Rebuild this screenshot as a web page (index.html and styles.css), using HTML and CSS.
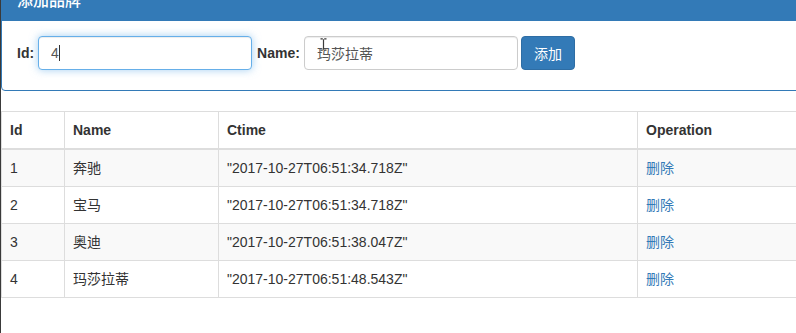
FILE: index.html
```html
<!DOCTYPE html>
<html>
<head>
    <title>品牌列表</title>
    <meta charset="utf-8">
    <link rel="stylesheet" href="styles.css">
</head>
<body>
    <div class="page">
        <div class="panel panel-primary">
            <div class="panel-heading">
                <h3 class="panel-title">添加品牌</h3>
            </div>
            <div class="panel-body form-inline">
                <label class="form-label">Id:</label>
                <span class="field id-field">
                    <input type="text" class="form-control is-focused" value="4">
                    <span class="caret"></span>
                </span>
                <label class="form-label">Name:</label>
                <span class="field name-field">
                    <input type="text" class="form-control" value="玛莎拉蒂">
                    <!-- mouse pointer sitting over the field -->
                    <svg class="ibeam" width="7" height="13" viewBox="0 0 7 13">
                        <path d="M0.5 0.8h2.3M4.2 0.8h2.3M3.5 1.3v10.4M0.5 12.2h2.3M4.2 12.2h2.3" stroke="#3b3b3b" stroke-width="1.2" fill="none"/>
                    </svg>
                </span>
                <input type="button" class="btn btn-primary" value="添加">
            </div>
        </div>

        <table class="table table-bordered table-striped">
            <colgroup>
                <col class="col-id">
                <col class="col-name">
                <col class="col-ctime">
                <col>
            </colgroup>
            <thead>
                <tr>
                    <th>Id</th>
                    <th>Name</th>
                    <th>Ctime</th>
                    <th>Operation</th>
                </tr>
            </thead>
            <tbody>
                <tr>
                    <td>1</td>
                    <td>奔驰</td>
                    <td>"2017-10-27T06:51:34.718Z"</td>
                    <td><a href="#">删除</a></td>
                </tr>
                <tr>
                    <td>2</td>
                    <td>宝马</td>
                    <td>"2017-10-27T06:51:34.718Z"</td>
                    <td><a href="#">删除</a></td>
                </tr>
                <tr>
                    <td>3</td>
                    <td>奥迪</td>
                    <td>"2017-10-27T06:51:38.047Z"</td>
                    <td><a href="#">删除</a></td>
                </tr>
                <tr>
                    <td>4</td>
                    <td>玛莎拉蒂</td>
                    <td>"2017-10-27T06:51:48.543Z"</td>
                    <td><a href="#">删除</a></td>
                </tr>
            </tbody>
        </table>
    </div>
</body>
</html>
```

FILE: styles.css
```css
html, body {
    height: 100%;
    margin: 0;
    padding: 0;
    overflow: hidden;
}

body {
    box-sizing: border-box;
    border-left: 1px solid #3a3a3a; /* edge of the window */
    background: #fff;
    font-family: "Liberation Sans", Arial, "Noto Sans CJK SC", sans-serif;
    font-size: 14px;
    line-height: 20px;
    color: #333;
}

.page {
    width: 840px;
    margin-top: -19px; /* page is scrolled a little */
}

.panel {
    margin-bottom: 20px;
    background: #fff;
    border: 1px solid #337ab7;
    border-radius: 4px;
}

.panel-heading {
    padding: 10px 15px;
    background: #337ab7;
    border-bottom: 1px solid #337ab7;
    color: #fff;
}

.panel-title {
    margin: 0;
    font-size: 16px;
    font-weight: 500;
    line-height: 1.1;
}

.panel-body {
    padding: 15px 15px 20px;
}

.form-inline {
    display: flex;
    align-items: center;
}

.form-label {
    font-weight: bold;
    margin-right: 4px;
}

.form-control {
    box-sizing: border-box;
    width: 214px;
    height: 34px;
    padding: 6px 12px;
    font-family: inherit;
    font-size: 14px;
    color: #555;
    background: #fff;
    border: 1px solid #ccc;
    border-radius: 4px;
    box-shadow: inset 0 1px 1px rgba(0, 0, 0, .075);
    outline: none;
}

.form-control.is-focused {
    border-color: #66afe9;
    box-shadow: inset 0 1px 1px rgba(0, 0, 0, .075), 0 0 8px rgba(102, 175, 233, .6);
}

.field {
    position: relative;
    display: flex;
}

.id-field {
    margin-right: 5px;
}

.name-field {
    margin-right: 3px;
}

.caret {
    position: absolute;
    left: 21px;
    top: 9px;
    width: 1px;
    height: 16px;
    background: #333;
}

.ibeam {
    position: absolute;
    left: 16px;
    top: 2px;
}

.btn {
    box-sizing: border-box;
    height: 34px;
    padding: 6px 12px;
    font-family: inherit;
    font-size: 14px;
    border-radius: 4px;
    cursor: pointer;
}

.btn-primary {
    color: #fff;
    background: #337ab7;
    border: 1px solid #2e6da4;
}

.table {
    width: 100%;
    border-collapse: collapse;
    table-layout: fixed;
}

.table-bordered {
    border: 1px solid #ddd;
}

.table th, .table td {
    padding: 8px;
    line-height: 20px;
    text-align: left;
    vertical-align: top;
    border: 1px solid #ddd;
}

.table thead th {
    border-bottom-width: 2px;
}

.table-striped tbody tr:nth-child(odd) {
    background: #f9f9f9;
}

.col-id {
    width: 63px;
}

.col-name {
    width: 154px;
}

.col-ctime {
    width: 419px;
}

.table a {
    color: #337ab7;
    text-decoration: none;
}
```
